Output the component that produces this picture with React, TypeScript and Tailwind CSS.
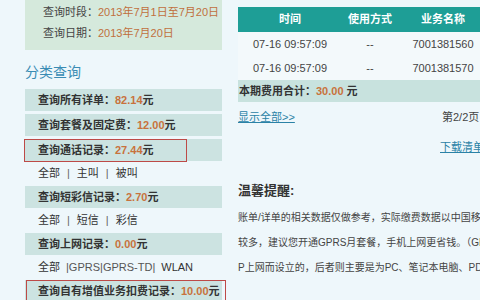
const font = "font-['Liberation_Sans','Noto_Sans_CJK_SC',sans-serif]"

function Row({ label, value, box, gap }: { label: string; value: string; box?: 'short' | 'long'; gap?: boolean }) {
  return (
    <div
      className={`relative h-[22px] bg-[#cce3e1] flex items-center pl-[13px] text-[11px] font-bold text-[#333] whitespace-nowrap ${
        gap ? 'mt-[3px]' : ''
      }`}
    >
      <span>{label}：</span>
      <span className="text-[#c8723c]">{value}</span>
      <span>元</span>
      {box === 'short' && (
        <span className="absolute left-[-1px] top-0 w-[163px] h-[23px] border-[1.5px] border-[#bd4a47]" />
      )}
      {box === 'long' && (
        <span className="absolute left-[1px] top-0 w-[200px] h-[24px] border-[1.5px] border-[#bd4a47]" />
      )}
    </div>
  )
}

function Links({ items }: { items: string[] }) {
  return (
    <div className="h-[25px] flex items-center pl-[13px] text-[11px] text-[#333] whitespace-nowrap">
      {items.map((it, i) => (
        <span key={i} className="flex items-center">
          {i > 0 && <span className="mx-[7px] text-[#666]">|</span>}
          <span>{it}</span>
        </span>
      ))}
    </div>
  )
}

export default function App() {
  return (
    <div className={`w-[480px] h-[300px] overflow-hidden bg-[#eef7fb] flex ${font}`}>
      {/* left column */}
      <div className="ml-[25px] w-[197px] shrink-0">
        <div className="h-[50px] bg-[#d5e9dc] pt-[2px] pl-[18px] text-[11px] text-[#444] whitespace-nowrap">
          <div className="h-[21px] flex items-center">
            查询时段：<span className="text-[#c0703e]">2013年7月1日至7月20日</span>
          </div>
          <div className="h-[21px] flex items-center">
            查询日期：<span className="text-[#c0703e]">2013年7月20日</span>
          </div>
        </div>

        <div className="h-[39px] pt-[5px] flex items-center text-[14px] text-[#3a8cb4]">分类查询</div>

        <Row label="查询所有详单" value="82.14" />
        <Row label="查询套餐及固定费" value="12.00" gap />
        <Row label="查询通话记录" value="27.44" box="short" gap />
        <Links items={['全部', '主叫', '被叫']} />
        <Row label="查询短彩信记录" value="2.70" />
        <Links items={['全部', '短信', '彩信']} />
        <Row label="查询上网记录" value="0.00" />
        <div className="h-[25px] flex items-center pl-[13px] text-[11px] text-[#333] whitespace-nowrap">
          <span>全部</span>
          <span className="ml-[6px] text-[#555]">|GPRS|GPRS-TD|</span>
          <span className="ml-[6px]">WLAN</span>
        </div>
        <Row label="查询自有增值业务扣费记录" value="10.00" box="long" />
      </div>

      {/* right column */}
      <div className="ml-[16px] w-[300px] shrink-0 pt-[7px]">
        <div className="grid grid-cols-[104px_56px_90px_50px] h-[25px] bg-[#1e9e96] text-white text-[11px] font-bold items-center text-center whitespace-nowrap">
          <span>时间</span>
          <span>使用方式</span>
          <span>业务名称</span>
          <span></span>
        </div>
        {['7001381560', '7001381570'].map((n) => (
          <div key={n} className="grid grid-cols-[104px_56px_90px_50px] h-[24px] bg-[#f3f9fb] text-[11px] text-[#444] items-center text-center whitespace-nowrap">
            <span>07-16 09:57:09</span>
            <span>--</span>
            <span>{n}</span>
            <span></span>
          </div>
        ))}
        <div className="h-[22px] bg-[#c8e2de] flex items-center pl-[1px] text-[11px] font-bold text-[#333] whitespace-nowrap">
          本期费用合计：<span className="text-[#c8723c]">30.00</span>&nbsp;元
        </div>

        <div className="h-[30px] flex items-center text-[11px] whitespace-nowrap">
          <span className="w-[204px] text-[#2a82a6] underline">显示全部&gt;&gt;</span>
          <span className="text-[#444]">第2/2页</span>
          <span className="ml-[2px] w-[30px] h-[18px] border border-[#bbb] bg-white" />
        </div>
        <div className="h-[30px] flex items-center pl-[202px] text-[11px] text-[#2a82a6] whitespace-nowrap">
          <span className="underline">下载清单(PDF)</span>
        </div>

        <div className="mt-[19px] h-[20px] flex items-center text-[13px] font-bold text-[#333]">温馨提醒:</div>
        <div className="mt-[4px] text-[10px] leading-[25px] text-[#444] whitespace-nowrap">
          <div>账单/详单的相关数据仅做参考，实际缴费数据以中国移动营业厅打印的发票为准。</div>
          <div>较多，建议您开通GPRS月套餐，手机上网更省钱。（GPRS-TD是中国移动为手机WA</div>
          <div>P上网而设立的，后者则主要是为PC、笔记本电脑、PDA等利用GPRS上网而设立的。）</div>
        </div>
      </div>
    </div>
  )
}
